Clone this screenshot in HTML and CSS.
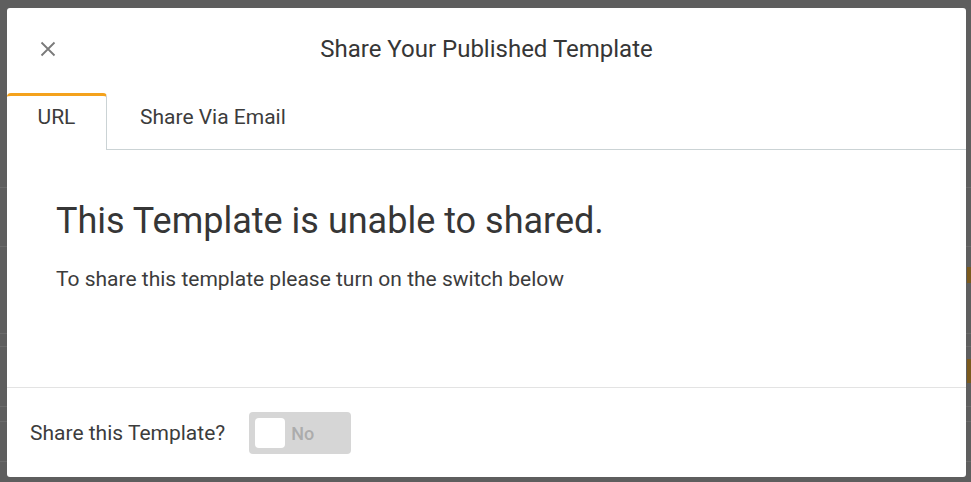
FILE: index.html
```html
<!DOCTYPE html>
<html lang="en">
<head>
<meta charset="utf-8">
<title>Share Your Published Template</title>
<link rel="stylesheet" href="styles.css">
</head>
<body>
<div class="backdrop">
  <div class="bg-row r1"></div>
  <div class="bg-row r2"><span class="bg-mark"></span></div>
  <div class="bg-row r3"></div>
  <div class="bg-row r4"></div>
  <div class="bg-row r5"><span class="bg-mark"></span></div>
  <div class="bg-row r6"></div>
  <div class="bg-row r7"></div>
</div>

<div class="modal">
  <div class="modal-header">
    <button class="close" aria-label="Close">
      <svg width="16" height="16" viewBox="0 0 16 16"><path d="M1.5 1.5 L14.5 14.5 M14.5 1.5 L1.5 14.5" stroke="#7a7a7a" stroke-width="1.8" fill="none"/></svg>
    </button>
    <h1 class="title">Share Your Published Template</h1>
  </div>
  <div class="tabs">
    <div class="tab active">URL</div>
    <div class="tab">Share Via Email</div>
    <div class="tab-fill"></div>
  </div>
  <div class="modal-body">
    <h2 class="heading">This Template is unable to shared.</h2>
    <p class="hint">To share this template please turn on the switch below</p>
  </div>
  <div class="modal-footer">
    <span class="label">Share this Template?</span>
    <div class="toggle">
      <span class="knob"></span>
      <span class="toggle-text">No</span>
    </div>
  </div>
</div>
</body>
</html>
```

FILE: styles.css
```css
* { box-sizing: border-box; }
html, body {
  margin: 0;
  padding: 0;
  width: 971px;
  height: 482px;
  overflow: hidden;
}
body {
  background: #5e5e5e;
  font-family: Roboto, "Liberation Sans", sans-serif;
  color: #333;
  position: relative;
}

/* dimmed page behind the modal */
.backdrop {
  display: flex;
  flex-direction: column;
  padding-top: 187px;
}
.bg-row {
  border-top: 1px solid #6b6b6b;
  position: relative;
}
.r1 { height: 59px; }
.r2 { height: 87px; }
.r3 { height: 13px; }
.r4 { height: 60px; }
.r5 { height: 15px; }
.r6 { height: 40px; }
.r7 { height: 20px; }
.bg-mark {
  position: absolute;
  right: 0;
  top: 20px;
  width: 4px;
  height: 16px;
  background: #7a5a1e;
}
.r5 .bg-mark { top: -48px; height: 24px; }

.modal {
  position: absolute;
  left: 7px;
  top: 8px;
  width: 959px;
  height: 469px;
  background: #fff;
  border-radius: 3px;
  display: flex;
  flex-direction: column;
}

.modal-header {
  position: relative;
  height: 85px;
  padding-top: 25px;
}
.close {
  position: absolute;
  left: 33px;
  top: 33px;
  width: 16px;
  height: 16px;
  padding: 0;
  border: 0;
  background: none;
  display: flex;
}
.title {
  margin: 0;
  text-align: center;
  font-size: 24px;
  font-weight: 400;
  line-height: 32px;
  color: #363636;
}

.tabs {
  display: flex;
  height: 57px;
}
.tab {
  font-size: 21px;
  line-height: 26px;
  padding: 11px 33px 0 33px;
  color: #3c3c3c;
  border-bottom: 1px solid #cbd3d5;
}
.tab.active {
  width: 100px;
  padding: 8px 0 0;
  text-align: center;
  border-top: 3px solid #f4a21c;
  border-right: 1px solid #cbd3d5;
  border-bottom: 0;
  border-radius: 4px 4px 0 0;
}
.tab-fill {
  flex: 1;
  border-bottom: 1px solid #cbd3d5;
}

.modal-body {
  height: 238px;
  padding: 51px 48px 0 49px;
  border-bottom: 1px solid #e3e3e3;
}
.heading {
  margin: 0;
  font-size: 36px;
  font-weight: 400;
  line-height: 40px;
  color: #363636;
}
.hint {
  margin: 24px 0 0;
  font-size: 21px;
  line-height: 28px;
  color: #3c3c3c;
}

.modal-footer {
  flex: 1;
  display: flex;
  align-items: center;
  padding-left: 23px;
  gap: 24px;
}
.label {
  font-size: 21px;
  color: #3c3c3c;
}
.toggle {
  width: 102px;
  height: 42px;
  background: #d6d6d6;
  border-radius: 4px;
  display: flex;
  align-items: center;
  padding-left: 6px;
  gap: 6px;
}
.knob {
  width: 30px;
  height: 30px;
  background: #fff;
  border-radius: 4px;
}
.toggle-text {
  font-size: 18px;
  font-weight: 500;
  color: #acacac;
  margin-top: 2px;
}
```
